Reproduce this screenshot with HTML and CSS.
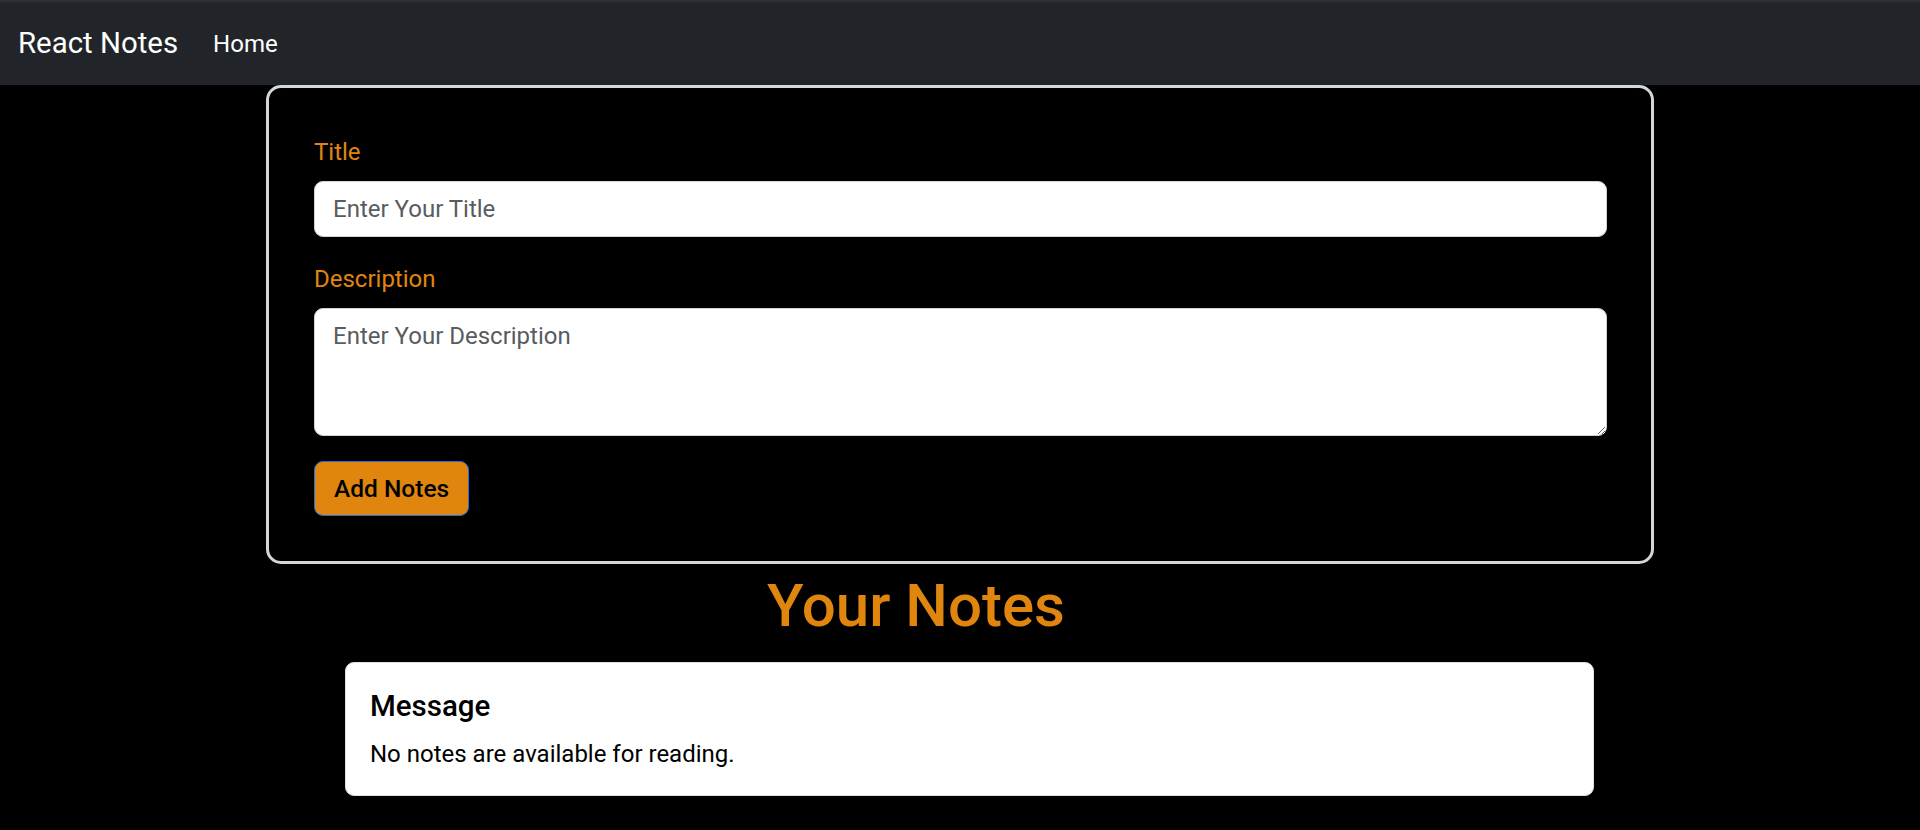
FILE: index.html
```html
<!DOCTYPE html>
<html lang="en">
<head>
<meta charset="utf-8">
<title>React Notes</title>
<link rel="stylesheet" href="styles.css">
</head>
<body>
<nav class="navbar">
  <a class="brand" href="#">React Notes</a>
  <a class="nav-link" href="#">Home</a>
</nav>
<main class="page">
  <form class="note-form">
    <label class="form-label" for="title">Title</label>
    <input class="form-control" id="title" type="text" placeholder="Enter Your Title">
    <label class="form-label" for="desc">Description</label>
    <textarea class="form-control textarea" id="desc" placeholder="Enter Your Description"></textarea>
    <button class="btn-add" type="button">Add Notes</button>
  </form>
  <h1 class="notes-heading">Your Notes</h1>
  <div class="notes-row">
    <div class="card">
      <h5 class="card-title">Message</h5>
      <p class="card-text">No notes are available for reading.</p>
    </div>
  </div>
</main>
</body>
</html>
```

FILE: styles.css
```css
* { box-sizing: border-box; }
html, body { margin: 0; padding: 0; }
body {
  background: #000;
  font-family: "Segoe UI", Roboto, "Liberation Sans", sans-serif;
  color: #212529;
  height: 830px;
  overflow: hidden;
}
.navbar {
  height: 85px;
  background: #212529;
  border-top: 2px solid #2c2f33;
  display: flex;
  align-items: center;
  padding: 0 18px;
}
.brand {
  color: #fff;
  font-size: 29.4px;
  line-height: 45px;
  text-decoration: none;
  margin-right: 23px;
}
.nav-link {
  color: #fff;
  font-size: 24px;
  line-height: 36px;
  padding: 0 12px;
  text-decoration: none;
}
.page {
  width: 1388px;
  margin: 0 auto;
  display: flex;
  flex-direction: column;
}
.note-form {
  border: 3px solid #d3d6db;
  border-radius: 15px;
  padding: 46px 44px 45px 45px;
  display: flex;
  flex-direction: column;
  align-items: flex-start;
}
.form-label {
  color: #e0860f;
  font-size: 24px;
  line-height: 36px;
  margin-bottom: 11px;
}
.form-control {
  width: 100%;
  height: 56px;
  border: 1.5px solid #ced4da;
  border-radius: 9px;
  background: #fff;
  font-family: inherit;
  font-size: 24px;
  line-height: 36px;
  padding: 9px 18px;
  color: #212529;
  margin: 0 0 24px 0;
  outline: none;
}
.form-control::placeholder { color: #595c5f; }
.textarea {
  height: 128px;
  resize: vertical;
  display: block;
  margin-bottom: 25px;
}
.btn-add {
  height: 55px;
  padding: 0 19px;
  background: #e0860f;
  border: 1.5px solid #1f6ee8;
  border-radius: 9px;
  color: #000;
  font-family: inherit;
  font-size: 24.5px;
  font-weight: 500;
  line-height: 36px;
}
.notes-heading {
  margin: 6px 0 0;
  padding-right: 88px;
  text-align: center;
  color: #e0860f;
  font-size: 60px;
  line-height: 72px;
  font-weight: 500;
}
.notes-row {
  width: 1268px;
  margin: 20px auto 0;
  padding-left: 19px;
}
.card {
  background: #fff;
  border: 1.5px solid #dee2e6;
  border-radius: 9px;
  padding: 25px 24px 24px;
  height: 134px;
}
.card-title {
  margin: 0 0 12px;
  font-size: 29.5px;
  line-height: 36px;
  font-weight: 500;
  color: #000;
}
.card-text {
  margin: 0;
  font-size: 24px;
  line-height: 36px;
  color: #000;
}
```
